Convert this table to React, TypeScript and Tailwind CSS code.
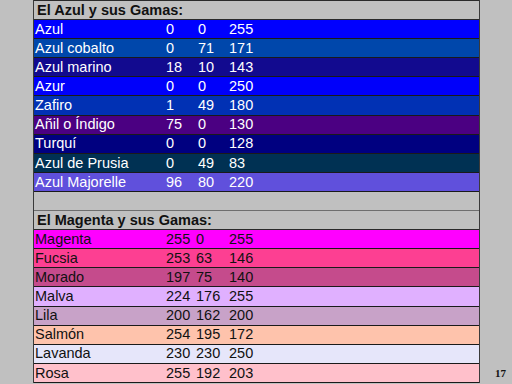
type Row = {
  name: string
  r: number
  g: number
  b: number
  bg: string
}

const azules: Row[] = [
  { name: 'Azul', r: 0, g: 0, b: 255, bg: 'bg-[#0000ff]' },
  { name: 'Azul cobalto', r: 0, g: 71, b: 171, bg: 'bg-[#0047ab]' },
  { name: 'Azul marino', r: 18, g: 10, b: 143, bg: 'bg-[#120a8f]' },
  { name: 'Azur', r: 0, g: 0, b: 250, bg: 'bg-[#0000fa]' },
  { name: 'Zafiro', r: 1, g: 49, b: 180, bg: 'bg-[#0131b4]' },
  { name: 'Añil o Índigo', r: 75, g: 0, b: 130, bg: 'bg-[#4b0082]' },
  { name: 'Turquí', r: 0, g: 0, b: 128, bg: 'bg-[#000080]' },
  { name: 'Azul de Prusia', r: 0, g: 49, b: 83, bg: 'bg-[#003153]' },
  { name: 'Azul Majorelle', r: 96, g: 80, b: 220, bg: 'bg-[#6050dc]' },
]

const magentas: Row[] = [
  { name: 'Magenta', r: 255, g: 0, b: 255, bg: 'bg-[#ff00ff]' },
  { name: 'Fucsia', r: 253, g: 63, b: 146, bg: 'bg-[#fd3f92]' },
  { name: 'Morado', r: 197, g: 75, b: 140, bg: 'bg-[#c54b8c]' },
  { name: 'Malva', r: 224, g: 176, b: 255, bg: 'bg-[#e0b0ff]' },
  { name: 'Lila', r: 200, g: 162, b: 200, bg: 'bg-[#c8a2c8]' },
  { name: 'Salmón', r: 254, g: 195, b: 172, bg: 'bg-[#fec3ac]' },
  { name: 'Lavanda', r: 230, g: 230, b: 250, bg: 'bg-[#e6e6fa]' },
  { name: 'Rosa', r: 255, g: 192, b: 203, bg: 'bg-[#ffc0cb]' },
]

function ColorRow({ row, light }: { row: Row; light: boolean }) {
  return (
    <div
      className={`flex-1 min-h-0 flex items-center border-b border-[#1a1a1a] ${row.bg} ${
        light ? 'text-white' : 'text-[#111]'
      }`}
    >
      <span className="w-[132px] pl-[1px] whitespace-nowrap">{row.name}</span>
      <span className={light ? 'w-[32px]' : 'w-[30px]'}>{row.r}</span>
      <span className={light ? 'w-[31px]' : 'w-[33px]'}>{row.g}</span>
      <span>{row.b}</span>
    </div>
  )
}

export default function App() {
  return (
    <div className="relative w-[512px] h-[384px] bg-[#c0c0c0] overflow-hidden font-['Liberation_Sans',Arial,sans-serif] text-[14.5px] leading-none">
      <div className="ml-[33px] w-[447px] h-[383px] flex flex-col border-x border-[#3a3a3a]">
        {/* Azul */}
        <div className="flex-1 min-h-0 flex items-center pl-[3px] border-t border-b border-[#2a2a2a] font-bold text-[#111]">
          El Azul y sus Gamas:
        </div>
        {azules.map((row) => (
          <ColorRow key={row.name} row={row} light />
        ))}

        {/* separador */}
        <div className="flex-1 min-h-0 border-b border-[#6e6e6e]" />

        {/* Magenta */}
        <div className="flex-1 min-h-0 flex items-center pl-[3px] border-b border-[#2a2a2a] font-bold text-[#111]">
          El Magenta y sus Gamas:
        </div>
        {magentas.map((row) => (
          <ColorRow key={row.name} row={row} light={false} />
        ))}
      </div>

      <span className="absolute right-[6px] bottom-[5px] font-['Liberation_Serif',serif] font-bold text-[11px] text-[#111]">
        17
      </span>
    </div>
  )
}
